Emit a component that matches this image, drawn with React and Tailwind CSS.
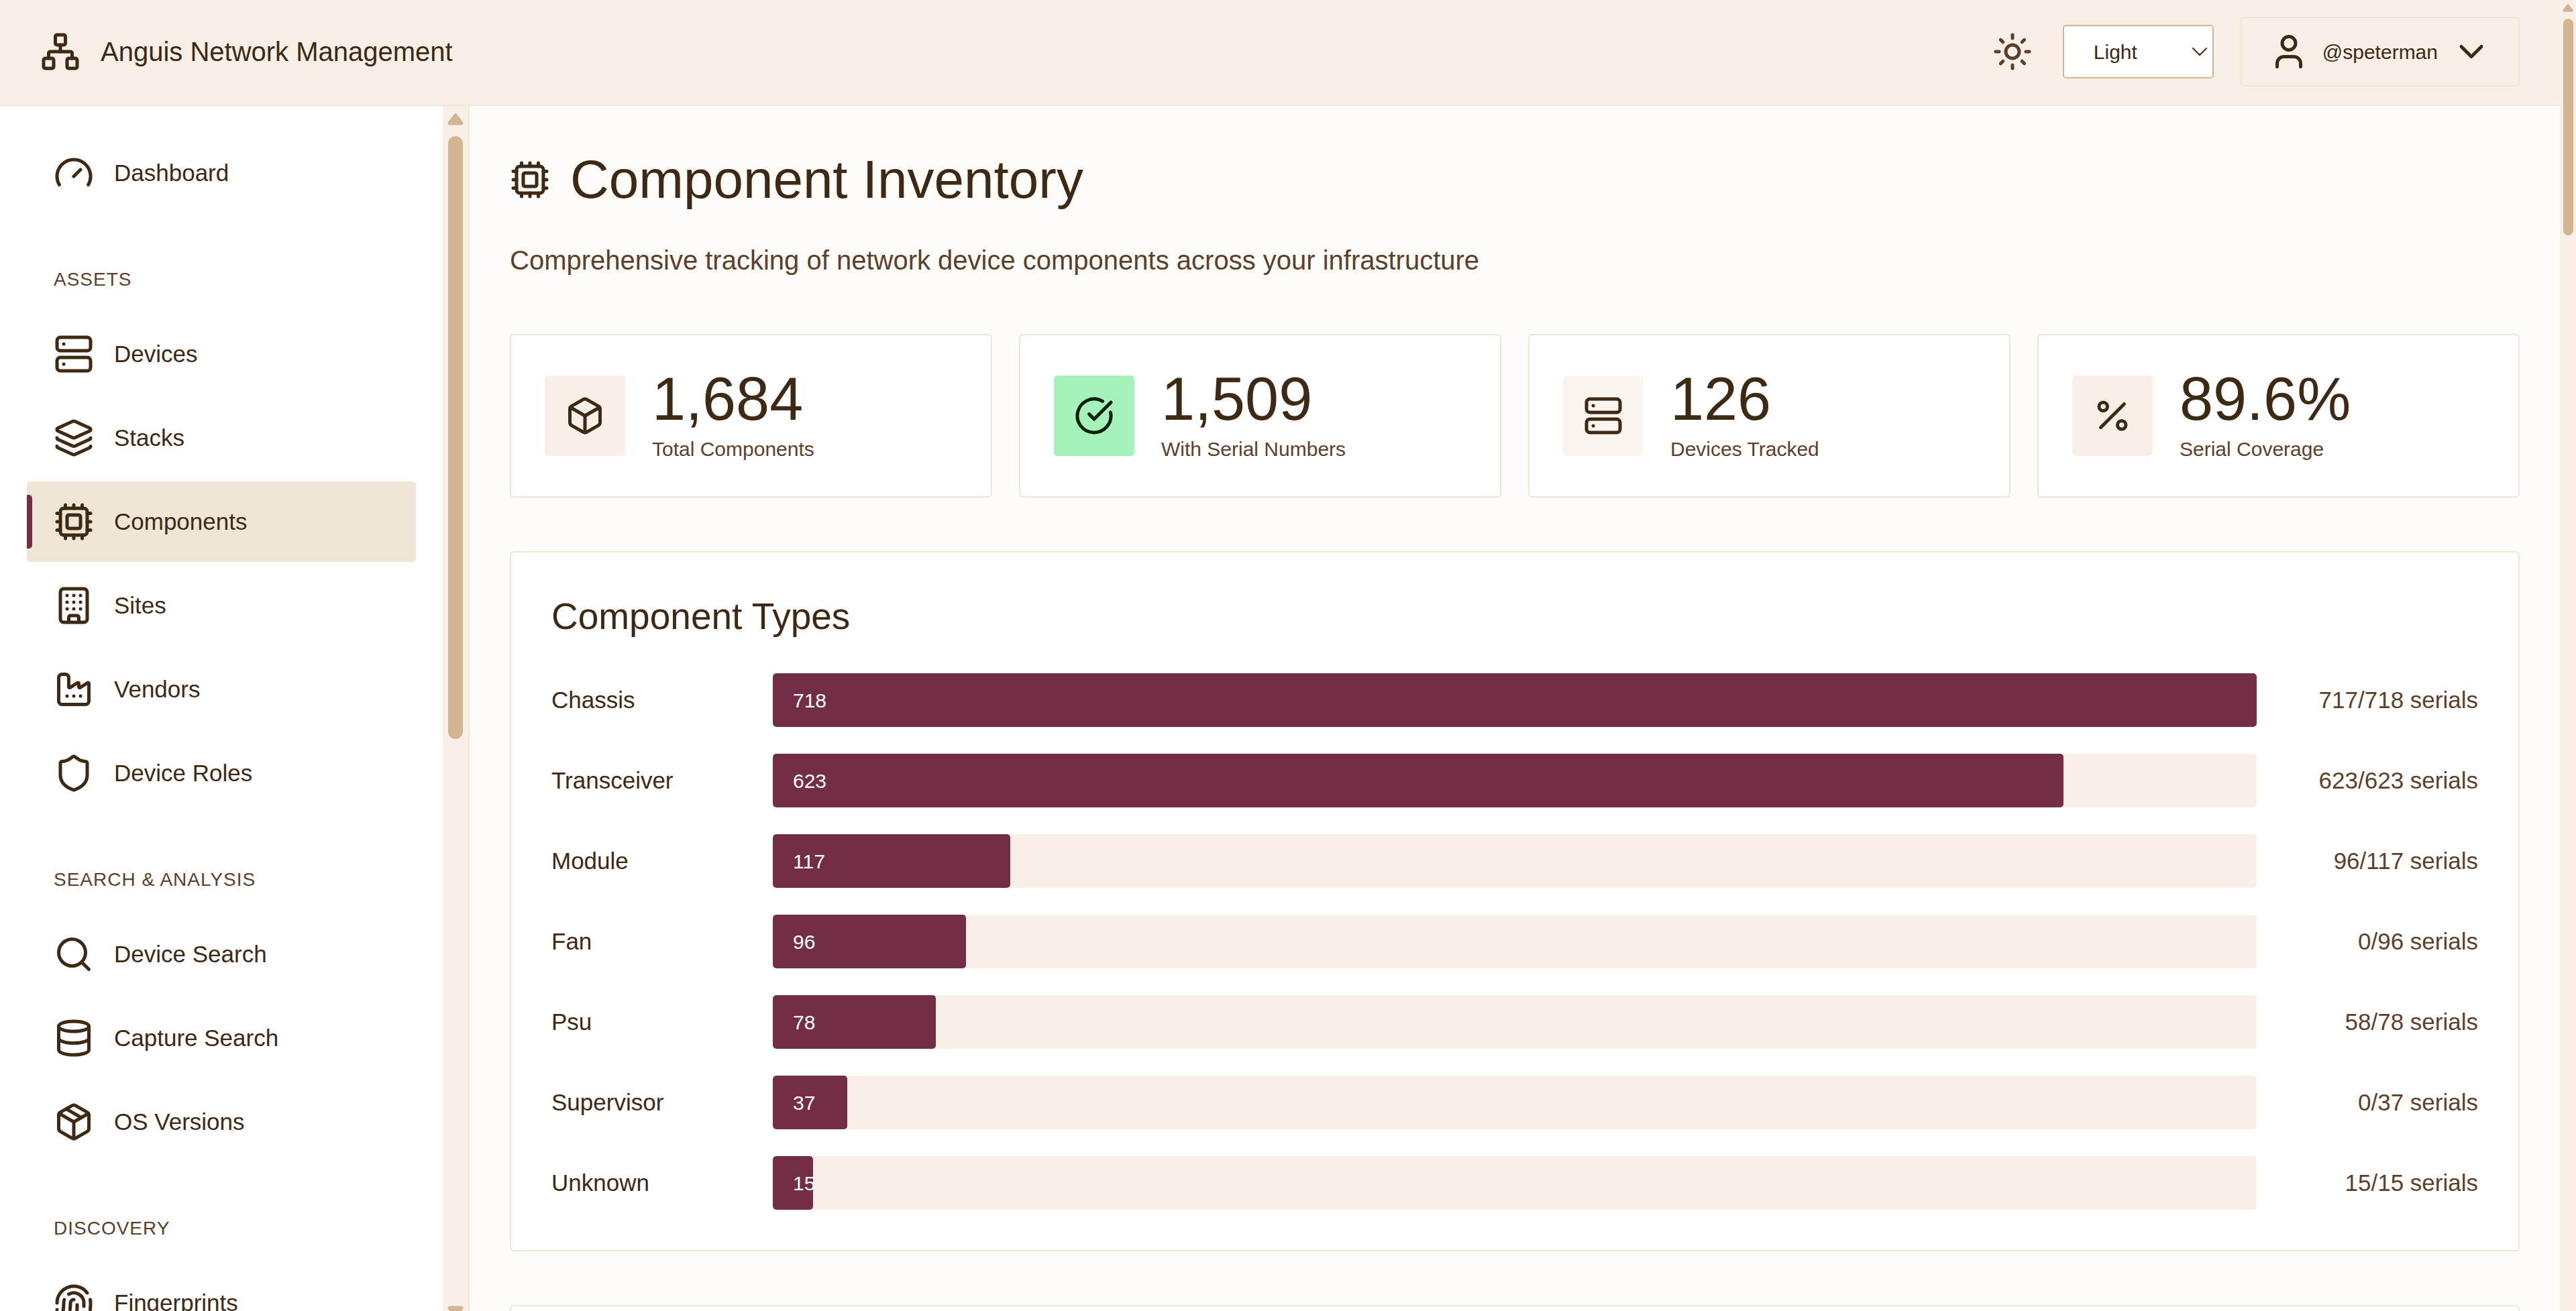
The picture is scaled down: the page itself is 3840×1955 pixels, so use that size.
import {
  Box,
  Building,
  ChevronDown,
  CircleCheckBig,
  Cpu,
  Database,
  Factory,
  Fingerprint,
  Gauge,
  Layers,
  Network,
  Package,
  Percent,
  Search,
  Server,
  Shield,
  Sun,
  User,
} from 'lucide-react';

const ICON = 'size-[60px] shrink-0';

const NAV_SECTIONS = [
  { title: null, items: [{ label: 'Dashboard', icon: Gauge }] },
  {
    title: 'Assets',
    items: [
      { label: 'Devices', icon: Server },
      { label: 'Stacks', icon: Layers },
      { label: 'Components', icon: Cpu, active: true },
      { label: 'Sites', icon: Building },
      { label: 'Vendors', icon: Factory },
      { label: 'Device Roles', icon: Shield },
    ],
  },
  {
    title: 'Search & Analysis',
    items: [
      { label: 'Device Search', icon: Search },
      { label: 'Capture Search', icon: Database },
      { label: 'OS Versions', icon: Package },
    ],
  },
  { title: 'Discovery', items: [{ label: 'Fingerprints', icon: Fingerprint }] },
];

const STATS = [
  { value: '1,684', label: 'Total Components', icon: Box, tone: 'bg-[#f8f0e6]' },
  { value: '1,509', label: 'With Serial Numbers', icon: CircleCheckBig, tone: 'bg-[#a6f2bb] text-[#002108]' },
  { value: '126', label: 'Devices Tracked', icon: Server, tone: 'bg-[#faf6ef]' },
  { value: '89.6%', label: 'Serial Coverage', icon: Percent, tone: 'bg-[#f8f0e6]' },
];

const TYPES = [
  { name: 'Chassis', count: 718, serials: 717 },
  { name: 'Transceiver', count: 623, serials: 623 },
  { name: 'Module', count: 117, serials: 96 },
  { name: 'Fan', count: 96, serials: 0 },
  { name: 'Psu', count: 78, serials: 58 },
  { name: 'Supervisor', count: 37, serials: 0 },
  { name: 'Unknown', count: 15, serials: 15 },
];

const MAX_COUNT = Math.max(...TYPES.map((t) => t.count));

function ScrollArrow({ className }) {
  return (
    <svg viewBox="0 0 24 18" aria-hidden="true" className={className}>
      <path
        d="M12 3.5 20.5 14.5H3.5Z"
        fill="#d4b592"
        stroke="#d4b592"
        strokeWidth="6"
        strokeLinejoin="round"
      />
    </svg>
  );
}

function Header() {
  return (
    <header className="flex shrink-0 items-center justify-between border-b-2 border-[#efe6d6] bg-[#f8f0e6] px-[60px] pt-[25px] pb-[27px]">
      <div className="flex items-center gap-[30px]">
        <Network className={ICON} />
        <span className="text-[40px] leading-[60px]">Anguis Network Management</span>
      </div>
      <div className="flex items-center gap-[40px]">
        <div className="flex items-center gap-[45px]">
          <Sun className={`${ICON} text-[#5c402c]`} />
          <div className="relative">
            <select
              aria-label="Theme"
              defaultValue="Light"
              className="block h-[80px] w-[225px] appearance-none rounded-[5px] border-2 border-[#d4b592] bg-white pl-[44px] text-[30px]"
            >
              <option>Light</option>
              <option>Dark</option>
            </select>
            <svg
              viewBox="0 0 24 14"
              fill="none"
              stroke="currentColor"
              strokeWidth="2"
              strokeLinecap="round"
              aria-hidden="true"
              className="pointer-events-none absolute top-[33px] right-[9px] h-[14px] w-[24px]"
            >
              <path d="M2 2 12 12 22 2" />
            </svg>
          </div>
        </div>
        <button
          type="button"
          className="flex items-center gap-[20px] rounded-[5px] border-2 border-[#efe6d6] px-[40px] py-[20px] text-[30px]"
        >
          <User className={ICON} />
          <span>@speterman</span>
          <ChevronDown className={ICON} />
        </button>
      </div>
    </header>
  );
}

function NavItem({ label, icon: Icon, active }) {
  return (
    <li>
      <a
        href="#"
        aria-current={active ? 'page' : undefined}
        className={`relative flex h-[120px] items-center gap-[30px] rounded-[5px] px-[40px] text-[35px] ${
          active ? 'bg-[#efe6d6]' : ''
        }`}
      >
        {active && (
          <span className="absolute top-[20px] left-0 h-[80px] w-[8px] rounded-r-[5px] bg-[#732d44]" />
        )}
        <Icon className={ICON} />
        {label}
      </a>
    </li>
  );
}

function Sidebar() {
  return (
    <aside className="flex h-[calc(100vh-137px)] w-[700px] shrink-0 border-r-2 border-[#efe6d6] bg-white">
      <nav className="flex-1 overflow-hidden p-[40px]">
        {NAV_SECTIONS.map((section) => (
          <div key={section.title ?? 'top'}>
            {section.title && (
              <h2 className="mt-[80px] mb-[32px] px-[40px] text-[28px] leading-[38px] tracking-[1px] text-[#5c402c] uppercase">
                {section.title}
              </h2>
            )}
            <ul className="flex flex-col gap-[5px]">
              {section.items.map((item) => (
                <NavItem key={item.label} {...item} />
              ))}
            </ul>
          </div>
        ))}
      </nav>
      <div className="flex w-[38px] shrink-0 flex-col items-center bg-[#f8f0e6] py-[11px]">
        <ScrollArrow className="h-[18px] w-[24px]" />
        <div className="my-[16px] flex w-[22px] flex-1 flex-col">
          <div className="h-[52%] rounded-full bg-[#d4b592]" />
        </div>
        <ScrollArrow className="h-[18px] w-[24px] rotate-180" />
      </div>
    </aside>
  );
}

function StatCard({ value, label, icon: Icon, tone }) {
  return (
    <div className="flex items-center gap-[40px] rounded-[6px] border-2 border-[#efe6d6] bg-white p-[50px]">
      <div className={`flex size-[120px] shrink-0 items-center justify-center rounded-[5px] ${tone}`}>
        <Icon className={ICON} />
      </div>
      <div>
        <div className="text-[90px] leading-[90px]">{value}</div>
        <div className="mt-[10px] text-[30px] leading-[40px] text-[#5c402c]">{label}</div>
      </div>
    </div>
  );
}

function TypeRow({ name, count, serials }) {
  const percent = Math.round((count / MAX_COUNT) * 100);
  return (
    <div className="flex items-center gap-[30px] text-[35px]">
      <div className="w-[300px] shrink-0">{name}</div>
      <div className="h-[80px] flex-1 overflow-hidden rounded-[5px] bg-[#f8f0e6]">
        <div
          className="flex h-full min-w-[60px] items-center rounded-[5px] bg-[#732d44] pl-[30px] text-[30px] text-white"
          style={{ width: `${percent}%` }}
        >
          {count}
        </div>
      </div>
      <div className="w-[300px] shrink-0 text-right text-[#5c402c]">
        {serials}/{count} serials
      </div>
    </div>
  );
}

function Inventory() {
  return (
    <main className="flex flex-1 flex-col overflow-hidden bg-[#fefcf8] p-[60px]">
      <h1 className="flex items-center gap-[30px] text-[80px] leading-[100px]">
        <Cpu className={ICON} />
        Component Inventory
      </h1>
      <p className="mt-[40px] text-[40px] leading-[60px] text-[#5c402c]">
        Comprehensive tracking of network device components across your infrastructure
      </p>
      <div className="mt-[80px] grid grid-cols-4 gap-[40px]">
        {STATS.map((stat) => (
          <StatCard key={stat.label} {...stat} />
        ))}
      </div>
      <section className="mt-[80px] rounded-[6px] border-2 border-[#efe6d6] bg-white p-[60px]">
        <h2 className="text-[55px] leading-[70px]">Component Types</h2>
        <div className="mt-[50px] flex flex-col gap-[40px]">
          {TYPES.map((type) => (
            <TypeRow key={type.name} {...type} />
          ))}
        </div>
      </section>
      <section className="mt-[80px] h-[240px] shrink-0 rounded-[6px] border-2 border-[#efe6d6] bg-white" />
    </main>
  );
}

export default function App() {
  return (
    <div className="flex h-screen overflow-hidden bg-[#fefcf8] font-['Liberation_Sans',Arial,sans-serif] text-[#3d2914]">
      <div className="flex min-w-0 flex-1 flex-col">
        <Header />
        <div className="flex min-h-0 flex-1">
          <Sidebar />
          <Inventory />
        </div>
      </div>
      <div className="flex w-[24px] shrink-0 flex-col items-center bg-[#f8f0e6] pt-[6px]">
        <ScrollArrow className="h-[12px] w-[16px]" />
        <div className="mt-[10px] h-[323px] w-[15px] rounded-full bg-[#d4b592]" />
      </div>
    </div>
  );
}
